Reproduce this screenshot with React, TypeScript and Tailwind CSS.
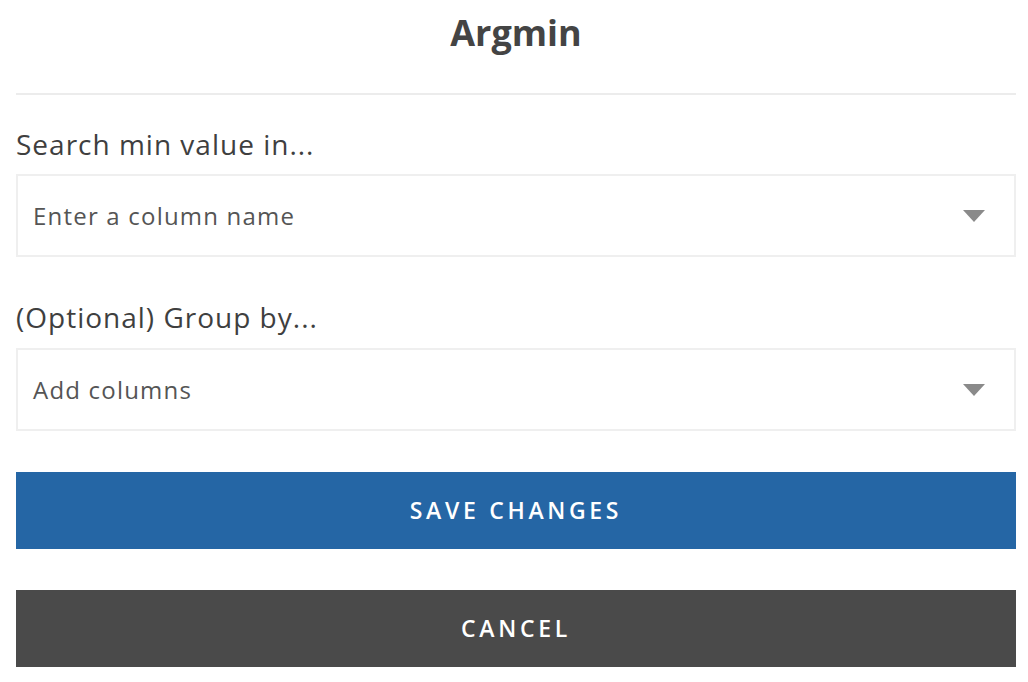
const FONT = "font-['Open_Sans',_'Liberation_Sans',_sans-serif]";

function Caret() {
  return (
    <svg width="22" height="12" viewBox="0 0 22 12" className="shrink-0">
      <path d="M0 0 H22 L11 12 Z" fill="#8a8a8a" />
    </svg>
  );
}

function SelectBox({ placeholder }: { placeholder: string }) {
  return (
    <div className="flex h-[83px] items-center justify-between border-2 border-[#efefef] bg-white pl-[15px] pr-[29px]">
      <span className="text-[24px] tracking-[1.2px] text-[#555555]">{placeholder}</span>
      <Caret />
    </div>
  );
}

export default function App() {
  return (
    <div className={`${FONT} min-h-screen bg-white text-[#3f3f3f]`}>
      <div className="ml-4 w-[1000px]">
        <h1 className="pt-[12px] text-center text-[36px] font-bold leading-[42px] text-[#444444]">Argmin</h1>
        <div className="mt-[39px] h-[2px] bg-[#ececec]" />

        <p className="mt-[32px] text-[28px] leading-[34px] tracking-[1px]">Search min value in...</p>
        <div className="mt-[13px]">
          <SelectBox placeholder="Enter a column name" />
        </div>

        <p className="mt-[43px] text-[28px] leading-[34px] tracking-[1px]">(Optional) Group by...</p>
        <div className="mt-[14px]">
          <SelectBox placeholder="Add columns" />
        </div>

        <button className="mt-[41px] flex h-[77px] w-full items-center justify-center bg-[#2566a5] text-[23px] font-semibold tracking-[0.16em] text-white">
          SAVE CHANGES
        </button>
        <button className="mt-[41px] flex h-[77px] w-full items-center justify-center bg-[#4a4a4a] text-[23px] font-semibold tracking-[0.16em] text-white">
          CANCEL
        </button>
      </div>
    </div>
  );
}
